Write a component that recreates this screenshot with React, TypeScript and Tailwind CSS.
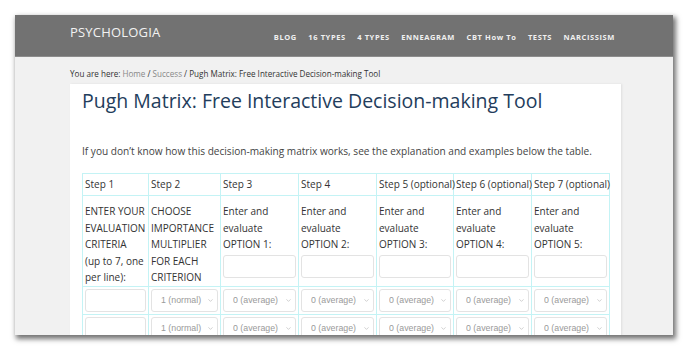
import { ChevronDown } from 'lucide-react';

const nav = ['BLOG', '16 TYPES', '4 TYPES', 'ENNEAGRAM', 'CBT How To', 'TESTS', 'NARCISSISM'];
const widths = [66, 72, 78, 78, 77, 78, 78];
const steps = ['Step 1', 'Step 2', 'Step 3', 'Step 4', 'Step 5 (optional)', 'Step 6 (optional)', 'Step 7 (optional)'];
const col1 = ['ENTER YOUR', 'EVALUATION', 'CRITERIA', '(up to 7, one', 'per line):'];
const col2 = ['CHOOSE', 'IMPORTANCE', 'MULTIPLIER', 'FOR EACH', 'CRITERION'];

function FakeSelect({ label }: { label: string }) {
  return (
    <div className="relative">
      <select
        defaultValue={label}
        className="h-[23px] w-full appearance-none rounded-[3px] border border-[#e3e3e3] bg-white pl-[9px] text-[8.8px] text-[#9a9a9a] outline-none"
        style={{ fontFamily: '"Liberation Sans", Arial, sans-serif' }}
      >
        <option>{label}</option>
      </select>
      <ChevronDown className="pointer-events-none absolute right-[4px] top-[8px] h-[7px] w-[7px] text-[#b0b0b0]" strokeWidth={2} />
    </div>
  );
}

function Row() {
  return (
    <tr>
      <td className="border border-[#c4f3f5] p-[2px]">
        <input className="h-[23px] w-full rounded-[3px] border border-[#e3e3e3] bg-white" />
      </td>
      <td className="border border-[#c4f3f5] p-[2px]">
        <FakeSelect label="1 (normal)" />
      </td>
      {[0, 1, 2, 3, 4].map((i) => (
        <td key={i} className="border border-[#c4f3f5] p-[2px]">
          <FakeSelect label="0 (average)" />
        </td>
      ))}
    </tr>
  );
}

function Lines({ lines }: { lines: string[] }) {
  return (
    <>
      {lines.map((l) => (
        <div key={l} className="whitespace-nowrap">
          {l}
        </div>
      ))}
    </>
  );
}

export default function App() {
  return (
    <div className="h-[350px] w-[686px] overflow-hidden bg-white" style={{ fontFamily: '"Open Sans", sans-serif' }}>
      <div className="pl-[15px] pt-[15px]">
        <div className="h-[320px] w-[658px] overflow-hidden bg-[#f1f1f1] shadow-[2px_3px_5px_1px_rgba(0,0,0,0.55)]">
          <header className="flex h-[42px] items-start justify-between border-b border-[#8c8c8c] bg-[#727272] pl-[55px] pr-[58px]">
            <div className="pt-[8px] text-[13px] tracking-[0.2px] text-[#f2f2f2]">PSYCHOLOGIA</div>
            <nav className="flex gap-[11.5px] pt-[17px] text-[7.5px] font-bold tracking-[0.6px] text-[#f0f0f0]">
              {nav.map((n) => (
                <span key={n}>{n}</span>
              ))}
            </nav>
          </header>

          <div className="pl-[55px]">
            <div className="pt-[11px] text-[8.1px] text-[#333]">
              You are here: <span className="text-[#888]">Home</span> / <span className="text-[#888]">Success</span> / Pugh Matrix: Free Interactive Decision-making Tool
            </div>

            <div className="mt-[4px] h-[300px] w-[551px] bg-white px-[12px] shadow-[1px_0_2px_rgba(0,0,0,0.08)]">
              <h1 className="pt-[3px] text-[19.5px] leading-[28px] text-[#233d5c]">
                Pugh Matrix: Free Interactive Decision-making Tool
              </h1>
              <p className="mt-[29px] whitespace-nowrap text-[10.1px] leading-[14px] text-[#444]">
                If you don’t know how this decision-making matrix works, see the explanation and examples below the table.
              </p>

              <table className="mt-[15px] table-fixed border-collapse text-[10px] text-[#333]" style={{ width: 527 }}>
                <colgroup>
                  {widths.map((w, i) => (
                    <col key={i} style={{ width: w }} />
                  ))}
                </colgroup>
                <tbody>
                  <tr>
                    {steps.map((s) => (
                      <td key={s} className="whitespace-nowrap border border-[#c4f3f5] px-[2px] py-[2px] leading-[17px]">
                        {s}
                      </td>
                    ))}
                  </tr>
                  <tr>
                    <td className="border border-[#c4f3f5] px-[2px] pt-[7px] align-top leading-[16.5px]">
                      <Lines lines={col1} />
                    </td>
                    <td className="border border-[#c4f3f5] px-[2px] pt-[7px] align-top leading-[16.5px]">
                      <Lines lines={col2} />
                    </td>
                    {[1, 2, 3, 4, 5].map((n) => (
                      <td key={n} className="border border-[#c4f3f5] px-[2px] pb-[2px] pt-[7px] align-top leading-[16.5px]">
                        <Lines lines={['Enter and', 'evaluate', `OPTION ${n}:`]} />
                        <input className="mt-[2px] block h-[23px] w-full rounded-[3px] border border-[#e3e3e3] bg-white" />
                      </td>
                    ))}
                  </tr>
                  <Row />
                  <Row />
                </tbody>
              </table>
            </div>
          </div>
        </div>
      </div>
    </div>
  );
}
